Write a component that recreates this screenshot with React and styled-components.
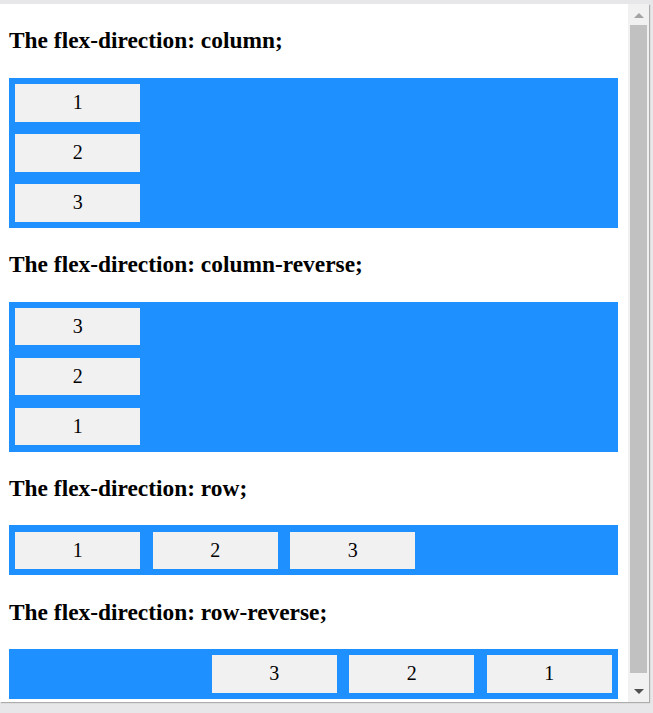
import React from 'react';
import styled, { createGlobalStyle } from 'styled-components';

const GlobalStyle = createGlobalStyle`
  html, body {
    margin: 0;
    padding: 0;
    background: #e7e7e9;
  }
`;

const Window = styled.div`
  width: 653px;
  height: 713px;
  display: flex;
  flex-direction: column;
  padding-top: 4px;
  box-sizing: border-box;
  overflow: hidden;
`;

const Frame = styled.div`
  display: flex;
  width: 649px;
  height: 698px;
  background: #ffffff;
  box-shadow: 1px 1px 1px rgba(0, 0, 0, 0.25);
`;

const Viewport = styled.div`
  width: 628px;
  height: 100%;
  overflow: hidden;
  padding: 0 10px 0 9px;
  box-sizing: border-box;
  font-family: 'Liberation Serif', 'Times New Roman', serif;
  color: #000;
`;

const Heading = styled.h3`
  margin: 23.4px 0;
  font-size: 23.4px;
  line-height: 27px;
  font-weight: 700;
`;

const FlexBox = styled.div`
  display: flex;
  flex-direction: ${p => p.$direction};
  background: #1e90ff;
`;

const Item = styled.div`
  width: 125px;
  margin: 6.25px;
  background: #f1f1f1;
  text-align: center;
  line-height: 37.5px;
  font-size: 20px;
`;

const Scrollbar = styled.div`
  width: 21px;
  height: 100%;
  background: #f1f1f1;
  display: flex;
  flex-direction: column;
  align-items: center;
`;

const Arrow = styled.div`
  height: 21px;
  width: 100%;
  display: flex;
  align-items: center;
  justify-content: center;
`;

const Thumb = styled.div`
  flex: 1;
  width: 17px;
  margin: 0 0 8px 2px;
  align-self: flex-start;
  background: #c1c1c1;
`;

const ArrowIcon = ({ down }) => (
  <svg width="10" height="6" viewBox="0 0 10 6">
    {down ? (
      <polygon points="0,0 10,0 5,5" fill="#505050" />
    ) : (
      <polygon points="0,6 10,6 5,1" fill="#a3a3a3" />
    )}
  </svg>
);

const sections = [
  { label: 'column', items: [1, 2, 3] },
  { label: 'column-reverse', items: [1, 2, 3] },
  { label: 'row', items: [1, 2, 3] },
  { label: 'row-reverse', items: [1, 2, 3] },
];

const App = () => {
  return (
    <>
      <GlobalStyle />
      <Window>
        <Frame>
          <Viewport>
            {sections.map(s => (
              <React.Fragment key={s.label}>
                <Heading>The flex-direction: {s.label};</Heading>
                <FlexBox $direction={s.label}>
                  {s.items.map(n => (
                    <Item key={n}>{n}</Item>
                  ))}
                </FlexBox>
              </React.Fragment>
            ))}
          </Viewport>
          <Scrollbar>
            <Arrow>
              <ArrowIcon />
            </Arrow>
            <Thumb />
            <Arrow>
              <ArrowIcon down />
            </Arrow>
          </Scrollbar>
        </Frame>
      </Window>
    </>
  );
};

export default App;
